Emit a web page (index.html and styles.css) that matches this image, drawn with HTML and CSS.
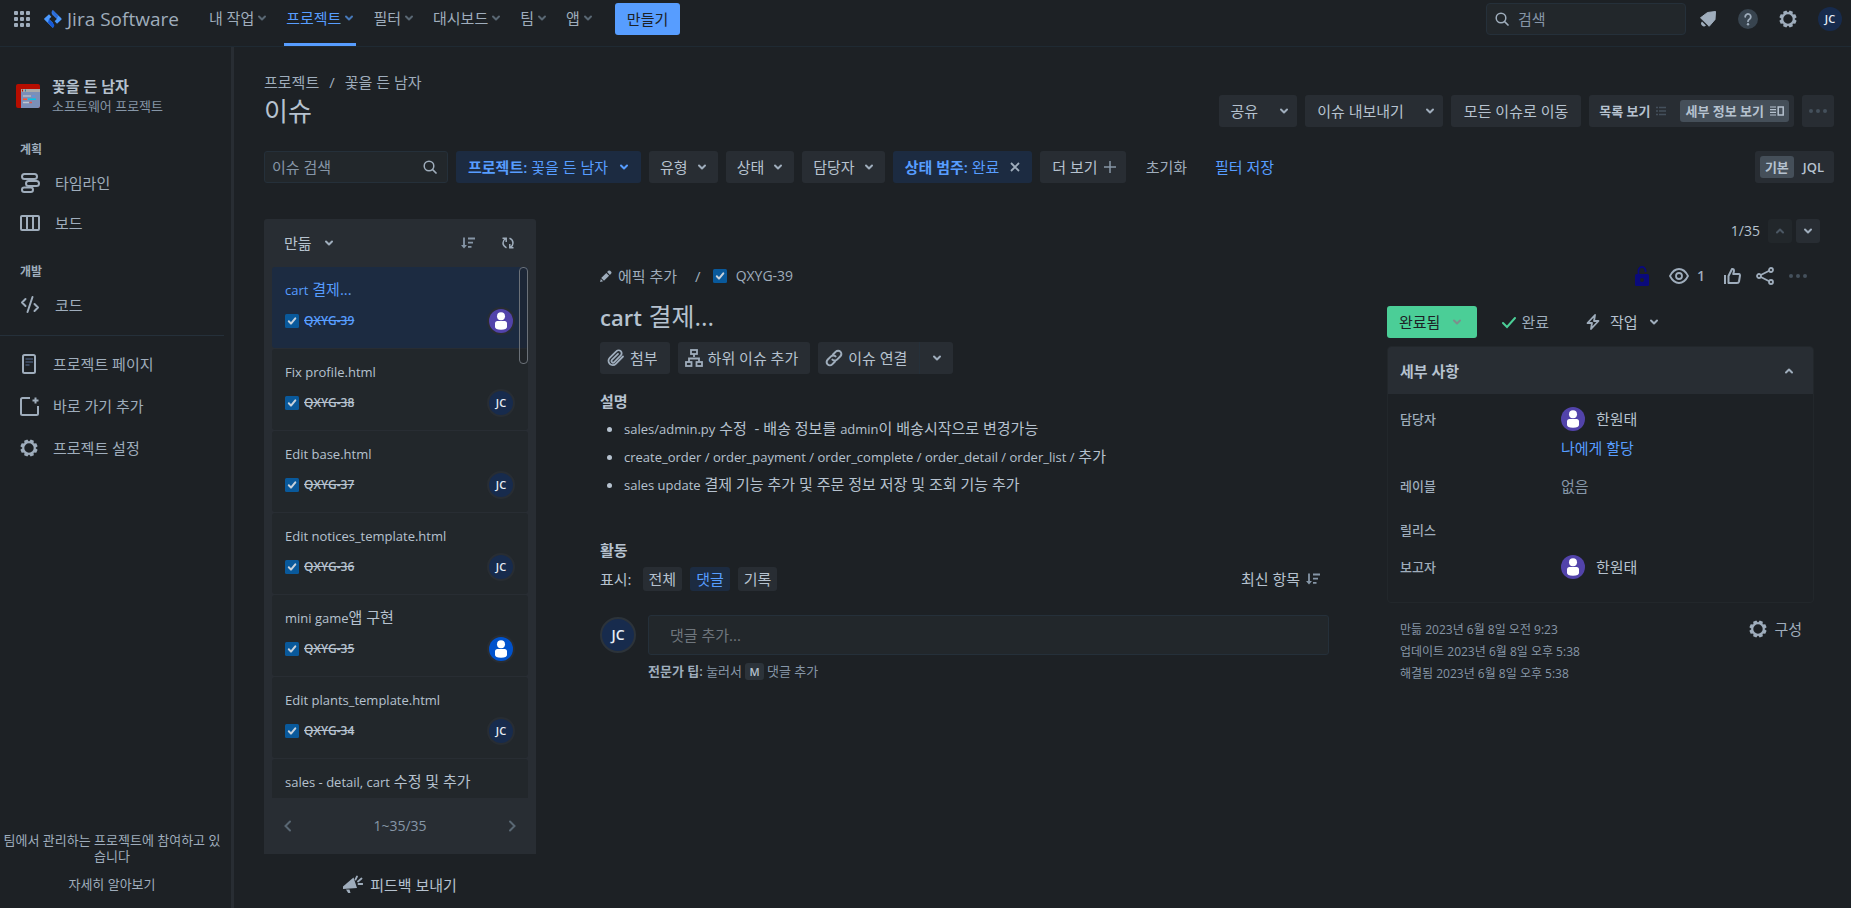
FILE: index.html
```html
<!DOCTYPE html>
<html lang="ko">
<head>
<meta charset="utf-8">
<meta name="viewport" content="width=device-width, initial-scale=1">
<title>이슈 - Jira Software</title>
<link rel="stylesheet" href="styles.css">
</head>
<body>
<svg class="sprite" aria-hidden="true">
  <symbol id="i-chev" viewBox="0 0 10 10"><path d="M2 3.5 5 6.5 8 3.5" fill="none" stroke="currentColor" stroke-width="2" stroke-linecap="round" stroke-linejoin="round"/></symbol>
  <symbol id="i-up" viewBox="0 0 10 10"><path d="M2 6.5 5 3.5 8 6.5" fill="none" stroke="currentColor" stroke-width="2" stroke-linecap="round" stroke-linejoin="round"/></symbol>
  <symbol id="i-left" viewBox="0 0 12 12"><path d="M8 1.5 3.5 6 8 10.500" fill="none" stroke="currentColor" stroke-width="2" stroke-linecap="round"/></symbol>
  <symbol id="i-right" viewBox="0 0 12 12"><path d="M4 1.500 8.500 6 4 10.500" fill="none" stroke="currentColor" stroke-width="2" stroke-linecap="round"/></symbol>
  <symbol id="i-search" viewBox="0 0 14 14"><circle cx="6" cy="6" r="4.800" fill="none" stroke="currentColor" stroke-width="1.500"/><path d="M9.500 9.500 13 13" stroke="currentColor" stroke-width="1.700" stroke-linecap="round"/></symbol>
  <symbol id="i-gear" viewBox="0 0 18 18"><circle cx="9" cy="9" r="5.700" fill="none" stroke="currentColor" stroke-width="2"/><g fill="currentColor"><path id="tooth" d="M6.600 3.200 7.300.4h3.400l.7 2.800z" transform="rotate(22.500 9 9)"/><use href="#tooth" transform="rotate(45 9 9)"/><use href="#tooth" transform="rotate(90 9 9)"/><use href="#tooth" transform="rotate(135 9 9)"/><use href="#tooth" transform="rotate(180 9 9)"/><use href="#tooth" transform="rotate(225 9 9)"/><use href="#tooth" transform="rotate(270 9 9)"/><use href="#tooth" transform="rotate(315 9 9)"/></g></symbol>
  <symbol id="i-task" viewBox="0 0 14 14"><rect width="14" height="14" rx="1.500" fill="#09599b"/><path d="M3.800 7.300 6 9.600 10.300 4.300" fill="none" stroke="#c7d1db" stroke-width="2" stroke-linecap="round" stroke-linejoin="round"/></symbol>
  <symbol id="i-sort" viewBox="0 0 14 12"><path d="M3 .5v9" stroke="currentColor" stroke-width="1.800"/><path d="M0 8h6L3 11.500z" fill="currentColor"/><path d="M7 1.500h7M7 5.700h5M7 9.900h3.500" stroke="currentColor" stroke-width="1.800"/></symbol>
  <symbol id="i-person" viewBox="0 0 24 24"><circle cx="12" cy="7.200" r="4" fill="#fff"/><path d="M6 14.500Q6 12 8.500 12h7q2.500 0 2.500 2.500v3.500q0 2.500-6 2.800-6-.3-6-2.800z" fill="#fff"/></symbol>
  <symbol id="i-dots" viewBox="0 0 18 4"><circle cx="2" cy="2" r="2" fill="currentColor"/><circle cx="9" cy="2" r="2" fill="currentColor"/><circle cx="16" cy="2" r="2" fill="currentColor"/></symbol>
</svg>

<header class="topbar">
  <button class="bare" aria-label="앱 전환"><svg class="ic16" viewBox="0 0 16 16" fill="currentColor"><rect width="4" height="4" rx="1"/><rect x="6" width="4" height="4" rx="1"/><rect x="12" width="4" height="4" rx="1"/><rect y="6" width="4" height="4" rx="1"/><rect x="6" y="6" width="4" height="4" rx="1"/><rect x="12" y="6" width="4" height="4" rx="1"/><rect y="12" width="4" height="4" rx="1"/><rect x="6" y="12" width="4" height="4" rx="1"/><rect x="12" y="12" width="4" height="4" rx="1"/></svg></button>
  <a class="brand" href="#"><svg class="ic18" viewBox="0 0 18 18"><defs><linearGradient id="jg" x1="1" y1="0" x2="0" y2="1"><stop offset="0" stop-color="#0b3fb5"/><stop offset="1" stop-color="#4c9aff"/></linearGradient></defs><path d="M8.700 0 17.300 8.300q.6.700 0 1.400L13 13.800 9 9.600z" fill="#4c9aff"/><path d="M9 18 .5 9.700q-.6-.7 0-1.400L5 4.200l4 4.200z" fill="#4c9aff"/><path d="M8.700 0Q6.400 2.700 8.700 5l4 4L14 6z" fill="url(#jg)"/><path d="M9 18q2.600-2.700 0-5L5 9l-1 3.500z" fill="#1558d6"/><path d="m9 5.200 3.800 3.800L9 12.800 5.200 9z" fill="#1d2125"/></svg><span>Jira Software</span></a>
  <nav class="topnav">
    <button>내 작업<svg class="chev"><use href="#i-chev"/></svg></button>
    <button class="active">프로젝트<svg class="chev"><use href="#i-chev"/></svg></button>
    <button>필터<svg class="chev"><use href="#i-chev"/></svg></button>
    <button>대시보드<svg class="chev"><use href="#i-chev"/></svg></button>
    <button>팀<svg class="chev"><use href="#i-chev"/></svg></button>
    <button>앱<svg class="chev"><use href="#i-chev"/></svg></button>
  </nav>
  <button class="create">만들기</button>
  <div class="tools">
    <label class="topsearch"><svg class="ic14"><use href="#i-search"/></svg><input type="text" placeholder="검색" aria-label="검색"></label>
    <button class="bare" aria-label="알림"><svg class="ic18" viewBox="0 0 18 18"><path d="M16.500 1.500 16 9.500 10.200 16.300 1.500 7.800 8.500 2.500z" fill="currentColor" stroke="currentColor" stroke-linejoin="round"/><path d="M3 11.500a2.700 2.700 0 0 0 4 4z" fill="currentColor"/></svg></button>
    <button class="bare" aria-label="도움말"><svg class="ic20" viewBox="0 0 20 20"><circle cx="10" cy="10" r="10" fill="#38444f"/><path d="M7.200 7.800a2.800 2.800 0 1 1 4.500 2.200Q10 11 10 12.300" fill="none" stroke="#9fadbc" stroke-width="1.800" stroke-linecap="round"/><circle cx="10" cy="15.200" r="1.200" fill="#9fadbc"/></svg></button>
    <button class="bare" aria-label="설정"><svg class="ic18"><use href="#i-gear"/></svg></button>
    <button class="avatar" aria-label="프로필">JC</button>
  </div>
</header>

<div class="shell">
  <aside class="sidebar">
    <div class="project">
      <svg class="ic24" viewBox="0 0 24 24"><rect width="24" height="24" rx="2" fill="#b60d00"/><path d="M5 5h19v17q0 2-2 2H5z" fill="#7b8fb8"/><path d="M5 5h19v3H5z" fill="#aaa9a7"/><path d="M6.500 5.500v2" stroke="#b60d00"/><path d="M9.500 5.500v2" stroke="#2a7fa0"/><path d="M7 12h8" stroke="#b3bac5" stroke-width="1.500"/><path d="M16 12h3" stroke="#5e93e0" stroke-width="1.500"/><path d="M7 15.200h4" stroke="#ff5630" stroke-width="1.500"/><path d="M12 15.200h8" stroke="#00c7e5" stroke-width="1.500"/><path d="M7 18.500h6" stroke="#c1c7d0" stroke-width="1.500"/><path d="M13.500 18.500h2.500" stroke="#e5534b" stroke-width="1.500"/></svg>
      <div><strong>꽃을 든 남자</strong><span>소프트웨어 프로젝트</span></div>
    </div>
    <nav class="menu">
      <h2>계획</h2>
      <a href="#"><svg class="ic20" viewBox="0 0 20 20" fill="none" stroke="currentColor" stroke-width="2"><rect x="2" y="1" width="15" height="5" rx="2.500"/><rect x="6" y="8" width="13" height="5" rx="2.500"/><rect x="2" y="14.500" width="11" height="4.500" rx="2.200"/></svg>타임라인</a>
      <a href="#"><svg class="ic20" viewBox="0 0 20 20" fill="none" stroke="currentColor" stroke-width="2"><rect x="1" y="3" width="18" height="14" rx="1"/><path d="M7 3v14M13 3v14"/></svg>보드</a>
      <h2>개발</h2>
      <a href="#"><svg class="ic20" viewBox="0 0 20 20" fill="none" stroke="currentColor" stroke-width="2" stroke-linecap="round" stroke-linejoin="round"><path d="M5.500 4 2 7.500 5.500 11M12.500 2 7.500 17M14.500 9 18 12.500 14.500 16"/></svg>코드</a>
    </nav>
    <nav class="menu lower">
      <a href="#"><svg class="ic20" viewBox="0 0 20 20" fill="none"><rect x="3" y="1" width="12" height="18" rx="1.500" stroke="currentColor" stroke-width="2"/><path d="M5.500 5h7.500M5.500 8h7.500M5.500 11h4" stroke="#44546f" stroke-width="1.500"/></svg>프로젝트 페이지</a>
      <a href="#"><svg class="ic20" viewBox="0 0 20 20" fill="none" stroke="currentColor" stroke-width="2"><path d="M10 2H2.500Q1 2 1 3.500v14Q1 19 2.500 19h14q1.500 0 1.500-1.500V10"/><path d="M15.500 1.500v6M12.500 4.500h6"/></svg>바로 가기 추가</a>
      <a href="#"><svg class="ic20 gear"><use href="#i-gear"/></svg>프로젝트 설정</a>
    </nav>
    <div class="sidefoot"><p>팀에서 관리하는 프로젝트에 참여하고 있습니다</p><a href="#">자세히 알아보기</a></div>
  </aside>

  <main class="main">
    <div class="crumbs"><a href="#">프로젝트</a><span>/</span><a href="#">꽃을 든 남자</a></div>
    <div class="titlerow">
      <h1>이슈</h1>
      <div class="actions">
        <button class="btn wide">공유<svg class="chev"><use href="#i-chev"/></svg></button>
        <button class="btn wide">이슈 내보내기<svg class="chev"><use href="#i-chev"/></svg></button>
        <button class="btn all">모든 이슈로 이동</button>
        <div class="segment">
          <button>목록 보기<svg class="ic10 dim" viewBox="0 0 10 10"><path d="M0 1.500h2M3 1.500h7M0 5h2M3 5h7M0 8.500h2M3 8.500h7" stroke="currentColor" stroke-width="1.300"/></svg></button>
          <button class="on">세부 정보 보기<svg class="ic14" viewBox="0 0 14 14"><path d="M0 3h6M0 5.700h6M0 8.400h6M0 11h6" stroke="currentColor" stroke-width="1.200"/><rect x="8.200" y="3" width="5" height="8" fill="none" stroke="currentColor" stroke-width="1.500"/></svg></button>
        </div>
        <button class="btn more" aria-label="더 보기"><svg class="dots"><use href="#i-dots"/></svg></button>
      </div>
    </div>

    <div class="filters">
      <label class="field"><input type="text" placeholder="이슈 검색" aria-label="이슈 검색"><svg class="ic14"><use href="#i-search"/></svg></label>
      <button class="btn sel"><span><b>프로젝트:</b> 꽃을 든 남자</span><svg class="chev"><use href="#i-chev"/></svg></button>
      <button class="btn pick">유형<svg class="chev"><use href="#i-chev"/></svg></button>
      <button class="btn pick">상태<svg class="chev"><use href="#i-chev"/></svg></button>
      <button class="btn pick">담당자<svg class="chev"><use href="#i-chev"/></svg></button>
      <button class="btn sel"><span><b>상태 범주:</b> 완료</span><svg class="ic10 x" viewBox="0 0 10 10"><path d="m1 1 8 8M9 1 1 9" stroke="currentColor" stroke-width="1.800"/></svg></button>
      <button class="btn add">더 보기<svg class="ic12" viewBox="0 0 12 12"><path d="M6 0v12M0 6h12" stroke="currentColor" stroke-width="1.500"/></svg></button>
      <button class="plain">초기화</button>
      <button class="plain link">필터 저장</button>
      <div class="segment small"><button class="on">기본</button><button>JQL</button></div>
    </div>

    <div class="work">
      <section class="listcol">
        <div class="panel">
          <div class="panelhead"><button class="bare">만듦<svg class="chev"><use href="#i-chev"/></svg></button>
            <button class="bare push" aria-label="정렬"><svg class="sort"><use href="#i-sort"/></svg></button>
            <button class="bare" aria-label="새로 고침"><svg class="ic12" viewBox="0 0 12 12" fill="none" stroke="currentColor" stroke-width="1.500"><path d="M4.500 10.800Q1 9 1 6q0-2.700 2.600-4.500M.5 1.300h3.700V5"/><path d="M7.500 1.200Q11 3 11 6q0 2.700-2.600 4.500M11.500 10.700H7.800V7"/></svg></button></div>
          <div class="cards">
            <a class="card cur" href="#"><span class="name"><span class="en">cart</span> 결제...</span><span class="meta"><svg class="ic14"><use href="#i-task"/></svg><s>QXYG-39</s><svg class="face violet"><use href="#i-person"/></svg></span></a>
            <a class="card" href="#"><span class="name"><span class="en">Fix profile.html</span></span><span class="meta"><svg class="ic14"><use href="#i-task"/></svg><s>QXYG-38</s><span class="avatar">JC</span></span></a>
            <a class="card" href="#"><span class="name"><span class="en">Edit base.html</span></span><span class="meta"><svg class="ic14"><use href="#i-task"/></svg><s>QXYG-37</s><span class="avatar">JC</span></span></a>
            <a class="card" href="#"><span class="name"><span class="en">Edit notices_template.html</span></span><span class="meta"><svg class="ic14"><use href="#i-task"/></svg><s>QXYG-36</s><span class="avatar">JC</span></span></a>
            <a class="card" href="#"><span class="name"><span class="en">mini game</span>앱 구현</span><span class="meta"><svg class="ic14"><use href="#i-task"/></svg><s>QXYG-35</s><svg class="face blue"><use href="#i-person"/></svg></span></a>
            <a class="card" href="#"><span class="name"><span class="en">Edit plants_template.html</span></span><span class="meta"><svg class="ic14"><use href="#i-task"/></svg><s>QXYG-34</s><span class="avatar">JC</span></span></a>
            <a class="card" href="#"><span class="name"><span class="en">sales - detail, cart</span> 수정 및 추가</span></a>
            <i class="thumb"></i>
          </div>
          <div class="pages"><button class="bare" aria-label="이전"><svg class="ic12"><use href="#i-left"/></svg></button><span>1~35/35</span><button class="bare" aria-label="다음"><svg class="ic12"><use href="#i-right"/></svg></button></div>
        </div>
        <button class="feedback"><svg class="ic20" viewBox="0 0 20 20" fill="currentColor"><path d="M0 11.500 10.500 2.500 14 13 0 14z"/><path d="M3 14.500h3.500L7.500 18H5.200z"/><path d="M12.500 4.500 14 1.500M15 6.500l3.500-3M15.500 9h4" stroke="currentColor" stroke-width="1.800" stroke-linecap="round" /></svg>피드백 보내기</button>
      </section>

      <article class="issue">
        <div class="pager"><span>1/35</span><button class="sq off" aria-label="이전 이슈"><svg class="chev"><use href="#i-up"/></svg></button><button class="sq" aria-label="다음 이슈"><svg class="chev"><use href="#i-chev"/></svg></button></div>
        <div class="cols">
          <div class="content">
            <div class="path"><button class="bare epic"><svg class="ic12" viewBox="0 0 12 12" fill="currentColor"><path d="M8.300.8Q9.300 0 10.200.8l1 1q.8.900 0 1.800L9.900 4.900 7.100 2.100zM6.300 2.900 9.100 5.700 4 10.800 1.200 8zM.8 8.900l2.300 2.300-3 .8z"/></svg>에픽 추가</button><span>/</span><svg class="ic14"><use href="#i-task"/></svg><a href="#">QXYG-39</a></div>
            <h2 class="headline"><span>cart</span> 결제...</h2>
            <div class="quick">
              <button class="btn tight"><svg class="ic18" viewBox="0 0 18 18"><path d="M16 7.500 8.800 14.800A4.200 4.200 0 0 1 2.700 8.800L9.500 2.200a3 3 0 0 1 4.300 4.200l-6.600 6.700a1.600 1.600 0 0 1-2.300-2.300L11 4.800" fill="none" stroke="currentColor" stroke-width="1.800" stroke-linecap="round"/></svg>첨부</button>
              <button class="btn tight"><svg class="ic18" viewBox="0 0 18 18" fill="none" stroke="currentColor" stroke-width="1.800"><rect x="6" y="1" width="6" height="4"/><path d="M9 5v3M4 13V9.500h10V13"/><rect x="1" y="13" width="5.500" height="4"/><rect x="11.500" y="13" width="5.500" height="4"/></svg>하위 이슈 추가</button>
              <div class="split"><button class="btn tight"><svg class="ic18" viewBox="0 0 18 18" fill="none" stroke="currentColor" stroke-width="2" stroke-linecap="round"><path d="M8 5.500 10.800 2.600a3.200 3.200 0 0 1 4.600 4.600L12 10.600a3.200 3.200 0 0 1-4.600 0"/><path d="M10 12.500 7.200 15.400a3.200 3.200 0 0 1-4.600-4.600L6 7.400a3.200 3.200 0 0 1 4.600 0"/></svg>이슈 연결</button><button class="btn drop" aria-label="연결 옵션"><svg class="chev"><use href="#i-chev"/></svg></button></div>
            </div>
            <h3>설명</h3>
            <ul class="desc">
              <li><span class="en">sales/admin.py</span> 수정 &nbsp;- 배송 정보를 <span class="en">admin</span>이 배송시작으로 변경가능</li>
              <li><span class="en">create_order / order_payment / order_complete / order_detail / order_list /</span> 추가</li>
              <li><span class="en">sales update</span> 결제 기능 추가 및 주문 정보 저장 및 조회 기능 추가</li>
            </ul>
            <h3>활동</h3>
            <div class="show"><span>표시:</span><button class="chip">전체</button><button class="chip on">댓글</button><button class="chip">기록</button><button class="bare latest">최신 항목<svg class="sort"><use href="#i-sort"/></svg></button></div>
            <div class="comment"><span class="avatar big">JC</span><div class="compose"><input type="text" placeholder="댓글 추가..." aria-label="댓글 추가"><p><b>전문가 팁:</b> 눌러서 <kbd>M</kbd> 댓글 추가</p></div></div>
          </div>

          <div class="info">
            <div class="icons">
              <button class="bare lock" aria-label="잠금"><svg class="ic20" viewBox="0 0 20 20"><path d="M6.500 9V4.500a3.500 3.500 0 0 1 7 0V6" fill="none" stroke="currentColor" stroke-width="1.800"/><rect x="3" y="8" width="14" height="12" rx="1.500" fill="currentColor"/><circle cx="10" cy="14" r="2" fill="#1d2125"/></svg></button>
              <button class="bare watch"><svg class="ic20" viewBox="0 0 20 20" fill="none" stroke="currentColor" stroke-width="1.800"><path d="M1 10q3.500-7 9-7t9 7q-3.500 7-9 7t-9-7z"/><circle cx="10" cy="10" r="3"/></svg>1</button>
              <button class="bare" aria-label="투표"><svg class="ic18" viewBox="0 0 18 18" fill="none" stroke="currentColor" stroke-width="2" stroke-linejoin="round"><path d="M2 8v9"/><path d="M5.500 16V9L9 2q2-.5 2 2L10.200 7H16q1 .3 1 1.500l-1 6q-.4 1.500-2 1.500z"/></svg></button>
              <button class="bare" aria-label="공유"><svg class="ic18" viewBox="0 0 18 18" fill="none" stroke="currentColor" stroke-width="1.800"><circle cx="15" cy="3" r="2"/><circle cx="15" cy="15" r="2"/><circle cx="3" cy="9" r="2"/><path d="m4.800 8 8.400-4.200M4.800 10l8.400 4.200"/></svg></button>
              <button class="bare dim" aria-label="작업 더 보기"><svg class="dots"><use href="#i-dots"/></svg></button>
            </div>
            <div class="states">
              <button class="status">완료됨<svg class="chev"><use href="#i-chev"/></svg></button>
              <span class="done"><svg class="ic14" viewBox="0 0 14 14"><path d="m1 8 4 4 8-9" fill="none" stroke="#4bce97" stroke-width="2" stroke-linecap="round"/></svg>완료</span>
              <button class="bare act"><svg class="ic16" viewBox="0 0 16 16"><path d="M10 1 2.500 9H7l-1 6 7.500-8H9z" fill="none" stroke="currentColor" stroke-width="1.800" stroke-linejoin="round"/></svg>작업<svg class="chev"><use href="#i-chev"/></svg></button>
            </div>
            <section class="details">
              <button class="dhead">세부 사항<svg class="chev"><use href="#i-up"/></svg></button>
              <dl>
                <div class="first"><dt>담당자</dt><dd><span class="who"><svg class="face violet"><use href="#i-person"/></svg>한원태</span><a href="#">나에게 할당</a></dd></div>
                <div><dt>레이블</dt><dd class="none">없음</dd></div>
                <div><dt>릴리스</dt><dd></dd></div>
                <div class="last"><dt>보고자</dt><dd><span class="who"><svg class="face violet"><use href="#i-person"/></svg>한원태</span></dd></div>
              </dl>
            </section>
            <div class="dates"><ul><li>만듦 2023년 6월 8일 오전 9:23</li><li>업데이트 2023년 6월 8일 오후 5:38</li><li>해결됨 2023년 6월 8일 오후 5:38</li></ul><button class="bare conf"><svg class="ic18"><use href="#i-gear"/></svg>구성</button></div>
          </div>
        </div>
      </article>
    </div>
  </main>
</div>
</body>
</html>
```

FILE: styles.css
```css
* { box-sizing: border-box; }
:root {
  --bg: #1d2125;
  --raised: #282d33;
  --input: #22272b;
  --sel: #1c2b41;
  --line: #25303a;
  --text: #b6c2cf;
  --subtle: #9fadbc;
  --muted: #8696a7;
  --faint: #44505c;
  --blue: #579dff;
}
body {
  margin: 0;
  min-height: 100vh;
  display: flex;
  flex-direction: column;
  background: var(--bg);
  color: var(--text);
  font: 15px/20px "Open Sans", "Noto Sans CJK KR", sans-serif;
}
h1, h2, h3, p, ul, dl, dd { margin: 0; padding: 0; }
a { color: inherit; text-decoration: none; }
button, input { font: inherit; color: inherit; margin: 0; }
button {
  border: 0;
  padding: 0;
  background: none;
  display: inline-flex;
  align-items: center;
  white-space: nowrap;
  cursor: pointer;
}
input { min-width: 0; border: 0; background: none; padding: 0; outline: none; }
input::placeholder { color: var(--muted); opacity: 1; }
svg { flex: none; display: block; }
.sprite { position: absolute; width: 0; height: 0; }
.en { font-size: 13px; line-height: 1; }
.ic10 { width: 10px; height: 10px; }
.ic12 { width: 12px; height: 12px; }
.ic14 { width: 14px; height: 14px; }
.ic16 { width: 16px; height: 16px; }
.ic18 { width: 18px; height: 18px; }
.ic20 { width: 20px; height: 20px; }
.ic20.gear { padding-right: 2px; }
.ic24 { width: 24px; height: 24px; }
.chev { width: 10px; height: 10px; color: var(--subtle); }
.sort { width: 14px; height: 12px; color: var(--muted); }
.dots { width: 18px; height: 4px; }
.bare, .topbar { color: var(--subtle); }
.dim { color: var(--faint); }

.avatar {
  width: 24px;
  height: 24px;
  flex: none;
  display: flex;
  align-items: center;
  justify-content: center;
  border-radius: 50%;
  background: #172b4d;
  color: #e6edf5;
  font-size: 11px;
  font-weight: 600;
}
.avatar.big { width: 36px; height: 36px; border: 2px solid #2c333a; font-size: 14px; }
.face { width: 24px; height: 24px; border-radius: 50%; }
.violet { background: #5243aa; }
.blue { background: #0052cc; }

/* Top bar */
.topbar {
  height: 47px;
  padding: 3px 9px 0 14px;
  display: flex;
  align-items: flex-start;
  border-bottom: 1px solid #1f2a33;
}
.topbar > .bare, .brand { height: 32px; }
.brand { display: flex; align-items: center; gap: 5px; margin: 0 28px 0 14px; font-size: 19px; }
.topnav { display: flex; align-self: stretch; gap: 15px; }
.topnav button { padding: 0 2px 10px; gap: 3px; border-bottom: 3px solid transparent; }
.topnav .chev { color: #596773; }
.topnav .active { color: var(--blue); border-color: var(--blue); }
.topnav .active .chev { color: #4678b8; }
.create {
  height: 32px;
  margin-left: 20px;
  padding: 0 12px;
  border-radius: 3px;
  background: var(--blue);
  color: var(--bg);
}
.tools { height: 32px; margin-left: auto; display: flex; align-items: center; gap: 21px; }
.topsearch {
  width: 200px;
  height: 32px;
  margin-right: -8px;
  padding: 0 8px;
  display: flex;
  align-items: center;
  gap: 9px;
  border: 1px solid var(--line);
  border-radius: 4px;
  background: var(--input);
}

/* Sidebar */
.shell { flex: 1; display: flex; }
.sidebar {
  width: 234px;
  flex: none;
  display: flex;
  flex-direction: column;
  border-right: 3px solid #282d33;
  color: var(--subtle);
}
.project { padding: 29px 16px 0; display: flex; align-items: center; gap: 12px; }
.project div { display: flex; flex-direction: column; }
.project strong { font-weight: 600; color: var(--text); font-size: 15px; }
.project span { font-size: 13px; color: var(--muted); }
.menu { display: flex; flex-direction: column; padding: 24px 20px 10px; }
.menu h2 { font-size: 12px; line-height: 20px; font-weight: 600; margin-bottom: 3px; }
.menu h2:not(:first-child) { margin-top: 19px; }
.menu a { height: 40px; display: flex; align-items: center; gap: 15px; }
.menu.lower { margin-right: 7px; padding-top: 7px; border-top: 1px solid var(--line); }
.menu.lower a { height: 42px; gap: 13px; }
.sidefoot {
  margin-top: auto;
  padding: 0 2px 16px 2px;
  width: 224px;
  text-align: center;
  font-size: 13px;
  line-height: 16px;
  word-break: break-all;
}
.sidefoot p { margin-bottom: 12px; }

/* Page header */
.main {
  flex: 1;
  min-width: 0;
  padding: 25px 17px 0 30px;
  display: flex;
  flex-direction: column;
}
.crumbs { display: flex; gap: 10px; color: var(--subtle); }
.titlerow { display: flex; align-items: flex-end; justify-content: space-between; height: 35px; }
h1 { font-size: 26px; line-height: 32px; font-weight: 400; }
.actions { display: flex; gap: 8px; }
.btn {
  height: 32px;
  padding: 0 12px;
  gap: 11px;
  border-radius: 3px;
  background: var(--raised);
  flex: none;
}
.btn.wide { gap: 21px; padding-right: 8px; }
.btn.all { padding: 0 13px; }
.btn.pick { gap: 9px; padding: 0 11px; }
.btn.more { padding: 0 7px; color: var(--faint); }
.btn.sel { background: var(--sel); color: var(--blue); }
.btn.sel .chev { color: var(--blue); }
.btn b { font-weight: 600; }
.btn .x { color: var(--subtle); }
.btn.add { gap: 6px; padding-right: 10px; }
.btn.add svg { color: var(--muted); }
.segment {
  height: 32px;
  padding: 5px;
  display: flex;
  gap: 9px;
  border-radius: 3px;
  background: var(--raised);
  font-size: 13px;
  font-weight: 600;
}
.segment button { height: 22px; padding: 0 5px; gap: 6px; border-radius: 3px; }
.segment .on { background: #454f59; }
.segment.small { margin-left: auto; gap: 4px; }
.filters { display: flex; gap: 8px; margin-top: 24px; }
.field {
  width: 184px;
  height: 32px;
  padding: 0 10px 0 7px;
  display: flex;
  align-items: center;
  justify-content: space-between;
  gap: 8px;
  border: 1px solid var(--line);
  border-radius: 3px;
  background: var(--input);
}
.field input { flex: 1; }
.field svg { color: var(--subtle); }
.plain { height: 32px; padding: 0 8px; margin-left: 4px; color: var(--subtle); }
.plain.link { color: var(--blue); }

/* Issue list */
.work { flex: 1; display: flex; margin-top: 36px; }
.listcol { width: 272px; flex: none; display: flex; flex-direction: column; }
.panel {
  flex: 1;
  padding: 0 8px;
  display: flex;
  flex-direction: column;
  border-radius: 3px 3px 0 0;
  background: var(--raised);
}
.panelhead { height: 48px; padding: 0 14px 0 12px; display: flex; align-items: center; gap: 27px; }
.panelhead .bare { gap: 12px; }
.panelhead .bare:first-child { color: var(--text); }
.panelhead .push { margin-left: auto; }
.cards {
  position: relative;
  flex: 1 1 531px;
  height: 531px;
  overflow: hidden;
  display: flex;
  flex-direction: column;
  gap: 1px;
}
.card {
  height: 81px;
  flex: none;
  padding: 12px 15px 0 13px;
  border-radius: 3px;
  background: var(--input);
}
.card.cur { background: var(--sel); color: var(--blue); }
.card .name { display: block; white-space: nowrap; }
.meta { display: flex; align-items: center; gap: 5px; margin-top: 10px; font-size: 12px; font-weight: 600; }
.meta .face, .meta .avatar { margin-left: auto; box-shadow: 0 0 0 2px var(--raised); }
.thumb {
  position: absolute;
  top: 0;
  right: 0;
  width: 9px;
  height: 97px;
  border: 1px solid #6b7178;
  border-radius: 4px;
  background: rgba(29, 33, 37, .4);
}
.pages {
  height: 56px;
  padding: 0 10px;
  display: flex;
  align-items: center;
  justify-content: space-between;
  color: var(--muted);
  font-size: 14px;
}
.pages .bare { color: #596773; }
.feedback { height: 54px; padding-top: 8px; justify-content: center; gap: 7px; }
.feedback svg { color: var(--subtle); }

/* Issue detail */
.issue { flex: 1; min-width: 0; padding: 0 14px 0 64px; }
.pager { height: 24px; display: flex; align-items: center; justify-content: flex-end; gap: 4px; font-size: 14px; }
.pager span { margin-right: 4px; }
.sq { width: 24px; height: 24px; border-radius: 3px; background: var(--raised); justify-content: center; }
.sq.off { background: var(--input); }
.sq.off .chev { color: #4b5763; }
.cols { display: grid; grid-template-columns: 729fr 427fr; gap: 58px; margin: 21px 6px 0 0; }
.content { min-width: 0; }
.path { height: 24px; display: flex; align-items: center; gap: 12px; color: var(--subtle); }
.epic { gap: 6px; margin-right: 6px; }
.path a { margin-left: -3px; font-size: 14px; }
.headline { font-size: 25px; line-height: 32px; font-weight: 400; margin: 12px 0 10px; }
.headline span { font-size: 22px; line-height: 1; font-weight: 600; }
.quick { display: flex; gap: 8px; }
.btn.tight { padding: 0 12px 0 7px; gap: 5px; }
.btn.tight svg { color: var(--subtle); }
.split { display: flex; }
.split .btn { border-radius: 3px 0 0 3px; }
.split .btn.drop { padding: 0 11px 0 12px; border-left: 1px solid var(--line); border-radius: 0 3px 3px 0; }
h3 { font-size: 15px; line-height: 20px; font-weight: 600; margin-top: 17px; }
.desc { margin: 3px 0 42px; padding-left: 24px; }
.desc li { line-height: 28px; }
.show { display: flex; align-items: center; gap: 8px; margin-top: 7px; }
.show > span { margin-right: 3px; }
.chip { height: 24px; padding: 0 6px; border-radius: 3px; background: var(--raised); }
.chip.on { background: var(--sel); color: var(--blue); }
.latest { margin-left: auto; padding-right: 9px; gap: 6px; color: var(--text); }
.comment { display: flex; align-items: flex-start; gap: 12px; margin-top: 24px; }
.comment .avatar { margin-top: 2px; }
.compose { flex: 1; }
.compose input {
  display: block;
  width: 100%;
  height: 40px;
  padding: 0 21px;
  border: 1px solid var(--line);
  border-radius: 3px;
  background: var(--input);
}
.compose input::placeholder { color: #6f767d; }
.compose p { margin-top: 6px; font-size: 13px; color: var(--muted); }
.compose b { font-weight: 600; color: var(--subtle); }
kbd { padding: 1px 4px; border-radius: 3px; background: #2c333a; color: var(--text); font: 600 11px "Open Sans", sans-serif; }

/* Issue side column */
.icons { height: 24px; display: flex; align-items: center; justify-content: flex-end; gap: 15px; padding-right: 7px; }
.lock { color: #0a0a7c; }
.icons .watch { gap: 8px; font-size: 14px; font-weight: 600; margin: 0 3px 0 2px; }
.icons .dim { color: var(--faint); }
.states { display: flex; margin-top: 18px; height: 32px; align-items: center; }
.status { height: 32px; padding: 0 15px 0 12px; gap: 12px; border-radius: 3px; background: #4bce97; color: #1d2125; }
.status .chev { color: #7d8f8c; }
.done { display: flex; align-items: center; gap: 5px; margin: 0 36px 0 25px; color: var(--subtle); }
.act { gap: 9px; color: var(--text); }
.act svg:first-child { color: var(--subtle); }
.act .chev { margin-left: 2px; }
.details { margin-top: 8px; border: 1px solid #22272b; border-radius: 4px; }
.dhead {
  width: 100%;
  height: 47px;
  padding: 0 19px 0 12px;
  justify-content: space-between;
  background: var(--raised);
  border-radius: 3px 3px 0 0;
  font-weight: 600;
}
dl { display: flex; flex-direction: column; gap: 6px; padding: 9px 12px 23px; }
dl > div { display: grid; grid-template-columns: 161px 1fr; min-height: 38px; align-items: center; }
dl > .first { align-items: start; }
dl > .last { min-height: 24px; }
dt { font-size: 13px; font-weight: 500; color: var(--subtle); }
.first dt { line-height: 32px; }
.who { display: flex; align-items: center; gap: 11px; }
.first .who { height: 32px; }
dd a { display: block; line-height: 26px; color: var(--blue); }
.none { color: var(--muted); }
.dates { display: flex; justify-content: space-between; align-items: flex-start; margin-top: 16px; padding: 0 12px 0 13px; }
.dates ul { list-style: none; font-size: 12px; line-height: 22px; color: var(--muted); }
.conf { gap: 7px; }
```
